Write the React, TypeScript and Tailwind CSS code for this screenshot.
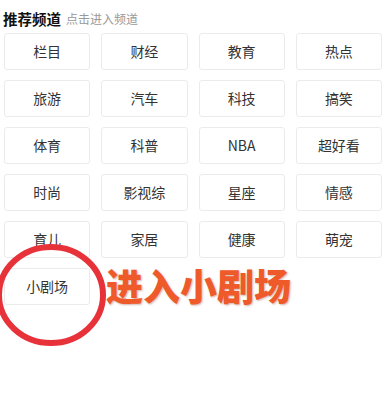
const channels = [
  "栏目", "财经", "教育", "热点",
  "旅游", "汽车", "科技", "搞笑",
  "体育", "科普", "NBA", "超好看",
  "时尚", "影视综", "星座", "情感",
  "育儿", "家居", "健康", "萌宠",
  "小剧场",
];

export default function App() {
  return (
    <div
      className="relative w-[386px] h-[411px] bg-white overflow-hidden"
      style={{ fontFamily: '"Noto Sans CJK SC", "Noto Sans", sans-serif' }}
    >
      <header className="flex items-end h-[26px] pl-[3px] gap-[5px]">
        <h1 className="text-[14.5px] font-bold text-[#111] leading-none">推荐频道</h1>
        <span className="text-[12px] text-[#999] leading-none pb-[1px]">点击进入频道</span>
      </header>

      <div className="grid grid-cols-4 gap-x-[11px] gap-y-[10px] pl-[4px] pr-[4px] mt-[7px]">
        {channels.map(name => (
          <div
            key={name}
            className="h-[37px] flex items-center justify-center rounded-[3px] border border-[#ebebeb] text-[14px] text-[#333]"
          >
            {name}
          </div>
        ))}
      </div>

      {/* annotation overlay */}
      <svg className="absolute left-0 top-0" width="386" height="411">
        <ellipse cx="51" cy="295" rx="52" ry="48" fill="none" stroke="#e8323a" strokeWidth="6" />
      </svg>
      <div
        className="absolute left-[106px] top-[267px] text-[37px] font-black text-[#ef5a2b] leading-none"
        style={{ textShadow: "1px 1px 2px rgba(120,40,20,0.35)" }}
      >
        进入小剧场
      </div>
    </div>
  );
}
